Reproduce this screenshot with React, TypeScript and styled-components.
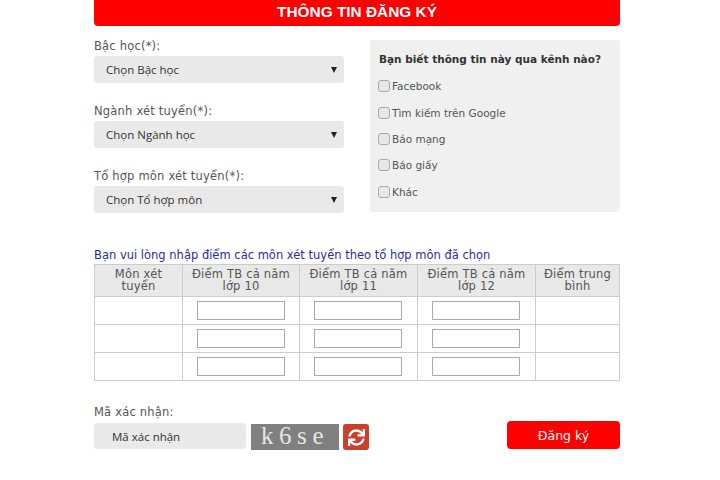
import React from "react";
import styled, { createGlobalStyle } from "styled-components";
import { FaSync } from "react-icons/fa";

const Global = createGlobalStyle`
  html, body { margin: 0; padding: 0; background: #fff; }
  body { font-family: "DejaVu Sans", Verdana, sans-serif; color: #555; }
`;

const Page = styled.div`
  width: 526px;
  margin-left: 94px;
  display: flex;
  flex-direction: column;
`;

const Banner = styled.h1`
  margin: 0;
  height: 26px;
  background: #fe0000;
  border-radius: 0 0 4px 4px;
  color: #fff;
  font: bold 15.4px/24px "Liberation Sans", Tahoma, sans-serif;
  text-align: center;
`;

const TopRow = styled.div`
  display: flex;
  justify-content: space-between;
  margin-top: 14px;
`;

const Fields = styled.div`
  width: 250px;
  display: flex;
  flex-direction: column;
  gap: 22px;
`;

const Field = styled.div`
  display: flex;
  flex-direction: column;
`;

const FieldLabel = styled.label`
  font-size: 11.5px;
  line-height: 12px;
  height: 16px;
  color: #555;
  letter-spacing: 0.2px;
`;

const SelectWrap = styled.div`
  position: relative;
  &::after {
    content: "";
    position: absolute;
    right: 7px;
    top: 11px;
    border-left: 3px solid transparent;
    border-right: 3px solid transparent;
    border-top: 6px solid #222;
  }
`;

const Select = styled.select`
  display: block;
  width: 100%;
  height: 27px;
  padding: 0 12px;
  border: 0;
  border-radius: 3px;
  background: #e9e9e9;
  appearance: none;
  color: #333;
  font: 11.5px "Open Sans", Tahoma, sans-serif;
`;

const Panel = styled.div`
  width: 250px;
  height: 172px;
  box-sizing: border-box;
  padding: 12px 9px 0;
  background: #f0f0f0;
  border-radius: 3px;
`;

const PanelTitle = styled.div`
  font-size: 10.5px;
  font-weight: bold;
  line-height: 14px;
  color: #333;
  white-space: nowrap;
  margin-bottom: 7px;
`;

const CheckRow = styled.label`
  display: flex;
  align-items: center;
  gap: 2px;
  height: 26.4px;
  font-size: 10.5px;
  color: #555;
`;

const Check = styled.input`
  appearance: none;
  box-sizing: border-box;
  width: 12px;
  height: 12px;
  margin: 0 0 0 -1px;
  border: 1px solid #aaa;
  border-radius: 3px;
  background: #e8e8e8;
`;

const Note = styled.p`
  margin: 34px 0 0;
  height: 17px;
  font-size: 11.5px;
  line-height: 16px;
  color: #2a2a9e;
`;

const ScoreTable = styled.table`
  width: 525px;
  table-layout: fixed;
  border-collapse: collapse;
`;

const HeadCell = styled.th`
  height: 27px;
  padding: 2px 6px;
  border: 1px solid #ccc;
  background: #e8e8e8;
  font-size: 11.5px;
  font-weight: normal;
  line-height: 11.5px;
  color: #555;
  letter-spacing: 0.2px;
`;

const Cell = styled.td`
  height: 27px;
  padding: 0;
  border: 1px solid #ccc;
  text-align: center;
  &:nth-child(n + 3) {
    padding-right: 2px;
  }
`;

const ScoreInput = styled.input`
  display: block;
  box-sizing: border-box;
  width: 88px;
  height: 19px;
  margin: 0 auto;
  border: 1px solid #aaa;
  background: #fff;
`;

const CaptchaLabel = styled.div`
  margin-top: 23px;
  font-size: 11.5px;
  line-height: 16px;
  color: #555;
  letter-spacing: 0.2px;
`;

const CaptchaRow = styled.div`
  display: flex;
  align-items: flex-start;
  margin-top: 3px;
`;

const CaptchaInput = styled.input`
  box-sizing: border-box;
  width: 152px;
  height: 26px;
  padding: 0 18px;
  border: 0;
  border-radius: 3px;
  background: #e9e9e9;
  font: 11.5px "Open Sans", Tahoma, sans-serif;
  &::placeholder { color: #333; opacity: 1; }
`;

const CaptchaImage = styled.div`
  width: 88px;
  height: 26px;
  margin-left: 5px;
  margin-top: 1px;
  background: #808080;
  color: #e6e6e6;
  font: 25px/23px "Liberation Serif", serif;
  letter-spacing: 5.6px;
  text-align: center;
`;

const Refresh = styled.button`
  width: 26px;
  height: 26px;
  margin-left: 4px;
  margin-top: 1px;
  padding: 0;
  border: 0;
  border-radius: 3px;
  background: #c9402c;
  color: #fff;
  display: flex;
  align-items: center;
  justify-content: center;
`;

const Submit = styled.button`
  width: 113px;
  height: 28px;
  margin-left: auto;
  margin-top: -2px;
  border: 0;
  border-radius: 4px;
  background: #fe0000;
  color: #fff;
  font: 12.5px "DejaVu Sans", Tahoma, sans-serif;
`;

const selects = [
  ["Bậc học(*):", "Chọn Bậc học"],
  ["Ngành xét tuyển(*):", "Chọn Ngành học"],
  ["Tổ hợp môn xét tuyển(*):", "Chọn Tổ hợp môn"],
];
const channels = ["Facebook", "Tìm kiếm trên Google", "Báo mạng", "Báo giấy", "Khác"];
const cols: [string, number][] = [
  ["Môn xét tuyển", 88],
  ["Điểm TB cả năm lớp 10", 117],
  ["Điểm TB cả năm lớp 11", 118],
  ["Điểm TB cả năm lớp 12", 118],
  ["Điểm trung bình", 84],
];

export default function App() {
  return (
    <Page>
      <Global />
      <Banner>THÔNG TIN ĐĂNG KÝ</Banner>
      <TopRow>
        <Fields>
          {selects.map(([label, option]) => (
            <Field key={label}>
              <FieldLabel>{label}</FieldLabel>
              <SelectWrap>
                <Select defaultValue={option}>
                  <option>{option}</option>
                </Select>
              </SelectWrap>
            </Field>
          ))}
        </Fields>
        <Panel>
          <PanelTitle>Bạn biết thông tin này qua kênh nào?</PanelTitle>
          {channels.map((c) => (
            <CheckRow key={c}>
              <Check type="checkbox" />
              {c}
            </CheckRow>
          ))}
        </Panel>
      </TopRow>
      <Note>Bạn vui lòng nhập điểm các môn xét tuyển theo tổ hợp môn đã chọn</Note>
      <ScoreTable>
        <colgroup>
          {cols.map(([name, w]) => (
            <col key={name} width={w} />
          ))}
        </colgroup>
        <thead>
          <tr>
            {cols.map(([name]) => (
              <HeadCell key={name}>{name}</HeadCell>
            ))}
          </tr>
        </thead>
        <tbody>
          {[0, 1, 2].map((r) => (
            <tr key={r}>
              <Cell />
              {[0, 1, 2].map((c) => (
                <Cell key={c}>
                  <ScoreInput type="text" />
                </Cell>
              ))}
              <Cell />
            </tr>
          ))}
        </tbody>
      </ScoreTable>
      <CaptchaLabel>Mã xác nhận:</CaptchaLabel>
      <CaptchaRow>
        <CaptchaInput placeholder="Mã xác nhận" />
        <CaptchaImage>k6se</CaptchaImage>
        <Refresh aria-label="refresh">
          <FaSync size={17} />
        </Refresh>
        <Submit>Đăng ký</Submit>
      </CaptchaRow>
    </Page>
  );
}
